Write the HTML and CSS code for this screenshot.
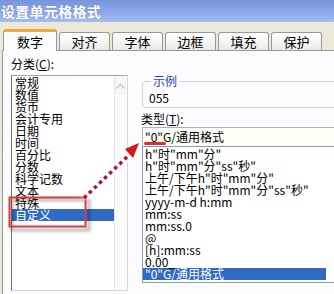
FILE: index.html
```html
<!DOCTYPE html>
<html>
<head>
<meta charset="utf-8">
<link rel="stylesheet" href="styles.css">
</head>
<body>
<div class="title">设置单元格格式</div>
<div class="tabs">
  <div class="tab active">数字</div>
  <div class="tab">对齐</div>
  <div class="tab">字体</div>
  <div class="tab">边框</div>
  <div class="tab">填充</div>
  <div class="tab">保护</div>
</div>
<div class="panel">
  <div class="left">
    <div class="label">分类(<u>C</u>):</div>
    <div class="listbox">
      <ul class="cats">
        <li>常规</li>
        <li>数值</li>
        <li>货币</li>
        <li>会计专用</li>
        <li>日期</li>
        <li>时间</li>
        <li>百分比</li>
        <li>分数</li>
        <li>科学记数</li>
        <li>文本</li>
        <li>特殊</li>
        <li class="sel">自定义</li>
      </ul>
      <div class="scroll"><div class="up"><svg width="9" height="6" viewBox="0 0 9 6"><path d="M1 5 L4.5 1.5 L8 5" fill="none" stroke="#c4c8d0" stroke-width="1.5"/></svg></div></div>
    </div>
  </div>
  <div class="right">
    <fieldset class="sample">
      <legend>示例</legend>
      <div class="sample-val">055</div>
    </fieldset>
    <div class="label type-label">类型(<u>T</u>):</div>
    <div class="input">"0"G/通用格式<span class="redline"></span></div>
    <ul class="types">
      <li>h"时"mm"分"</li>
      <li>h"时"mm"分"ss"秒"</li>
      <li>上午/下午h"时"mm"分"</li>
      <li>上午/下午h"时"mm"分"ss"秒"</li>
      <li>yyyy-m-d h:mm</li>
      <li>mm:ss</li>
      <li>mm:ss.0</li>
      <li>@</li>
      <li>[h]:mm:ss</li>
      <li>0.00_</li>
      <li class="sel">"0"G/通用格式</li>
    </ul>
  </div>
</div>
<svg class="annot" width="334" height="294" viewBox="0 0 334 294">
  <defs>
    <filter id="blur" x="-20%" y="-20%" width="140%" height="140%"><feGaussianBlur stdDeviation="1.5"/></filter>
  </defs>
  <rect x="12" y="200" width="77" height="30" fill="none" stroke="rgba(0,0,0,0.28)" stroke-width="3" filter="url(#blur)"/>
  <rect x="9.5" y="197.5" width="76" height="29" fill="none" stroke="#e03a3c" stroke-width="2"/>
  <line x1="84" y1="198" x2="129" y2="155" stroke="#fff" stroke-width="7" opacity="0.8" filter="url(#blur)"/>
  <line x1="84" y1="198" x2="129" y2="155" stroke="#b8102a" stroke-width="3.5" stroke-dasharray="3.5 3.5"/>
  <polygon points="139,143 125,149 133,158" fill="#d8141e"/>
</svg>
</body>
</html>
```
FILE: styles.css
```css
html, body {
  margin: 0;
  padding: 0;
}
body {
  width: 334px;
  height: 294px;
  overflow: hidden;
  position: relative;
  background: #ece9d8;
  font-family: "Noto Sans CJK SC", "Noto Sans", sans-serif;
  color: #000;
}
.title {
  height: 22px;
  line-height: 22px;
  background: linear-gradient(#7794da, #8eaaea 60%, #a7bdf0);
  color: #fff;
  font-size: 14px;
  font-weight: bold;
  padding-left: 1px;
  letter-spacing: 0.3px;
  text-shadow: 0 0 1px rgba(60, 80, 140, 0.5);
}
.tabs {
  height: 28px;
  display: flex;
  align-items: flex-end;
  padding-left: 3px;
  gap: 2px;
}
.tab {
  box-sizing: border-box;
  width: 51px;
  height: 18px;
  border: 1px solid #919b9c;
  border-bottom: none;
  border-radius: 3px 3px 0 0;
  background: linear-gradient(#ffffff, #ecebe5);
  font-size: 13px;
  line-height: 17px;
  text-align: center;
}
.tab.active {
  width: 54px;
  height: 22px;
  border-top: 3px solid #f0a73c;
  background: #fcfcfe;
  margin-bottom: -1px;
  position: relative;
  z-index: 1;
  line-height: 19px;
}
.panel {
  height: 243px;
  margin-left: 2px;
  background: #fcfcfe;
  border-left: 1px solid #919b9c;
  border-top: 1px solid #919b9c;
  display: flex;
  overflow: hidden;
}
.label {
  font-size: 12px;
  line-height: 14px;
}
.left {
  width: 117px;
  flex: none;
  margin-left: 8px;
  padding-top: 6px;
}
.listbox {
  margin-top: 4px;
  height: 214px;
  border: 1px solid;
  border-color: #a4a4a4 #d8d8d8 #d8d8d8 #6f6f6f;
  display: flex;
  background: #fff;
}
.cats {
  list-style: none;
  margin: 0;
  padding: 1px 0 0;
  flex: 1;
}
.cats li, .types li {
  font-size: 12px;
  line-height: 12px;
  height: 12px;
  white-space: nowrap;
}
.cats li {
  padding-left: 3px;
}
li.sel {
  background: #316ac5;
  color: #fff;
}
.scroll {
  width: 12px;
  flex: none;
  border-left: 1px solid #e6e6e6;
  background: #fbfbfb;
}
.up {
  height: 15px;
  margin: 1px 1px 0 0;
  border: 1px solid #eceef2;
  border-radius: 2px;
  display: flex;
  align-items: center;
  justify-content: center;
  background: #f6f7f9;
}
.right {
  width: 197px;
  flex: none;
  margin-left: 14px;
  padding-top: 24px;
}
.sample {
  margin: 0;
  padding: 4px 6px 3px;
  border: 1px solid #d3d3c6;
  border-radius: 4px;
}
.sample legend {
  padding: 0 2px;
  margin-left: 2px;
  font-size: 12px;
  line-height: 12px;
  color: #1848c0;
}
.sample-val {
  font-size: 12px;
  line-height: 13px;
}
.type-label {
  margin-top: 4px;
  margin-left: -1px;
}
.input {
  position: relative;
  margin-top: 1px;
  height: 18px;
  border: 1px solid #a9b2bf;
  border-bottom: none;
  background: #fefef7;
  padding-left: 2px;
  font-size: 12px;
  line-height: 17px;
}
.redline {
  position: absolute;
  left: 1px;
  top: 14px;
  width: 22px;
  height: 3px;
  border-radius: 2px;
  background: #e02c2c;
}
.types {
  list-style: none;
  margin: 0;
  padding: 1px 0 2px;
  border: 1px solid #7f9db9;
  background: #fff;
}
.types li {
  padding-left: 2px;
  margin-right: 12px;
}
.annot {
  position: absolute;
  left: 0;
  top: 0;
  pointer-events: none;
}
```
